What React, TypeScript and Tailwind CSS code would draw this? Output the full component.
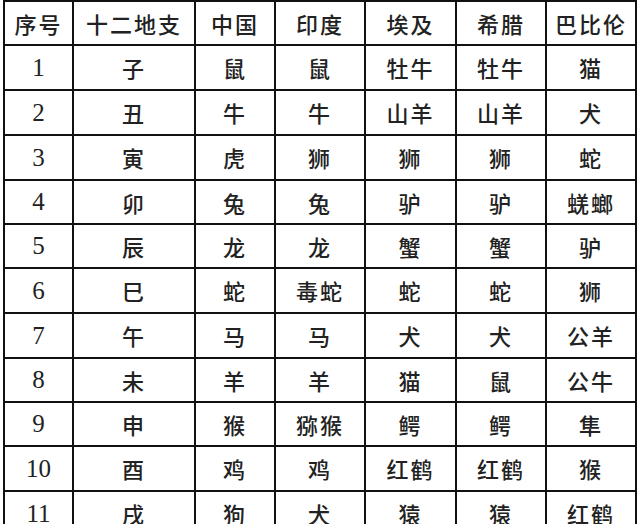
import React from "react";

const headers = ["序号", "十二地支", "中国", "印度", "埃及", "希腊", "巴比伦"];

const rows: string[][] = [
  ["1", "子", "鼠", "鼠", "牡牛", "牡牛", "猫"],
  ["2", "丑", "牛", "牛", "山羊", "山羊", "犬"],
  ["3", "寅", "虎", "狮", "狮", "狮", "蛇"],
  ["4", "卯", "兔", "兔", "驴", "驴", "蜣螂"],
  ["5", "辰", "龙", "龙", "蟹", "蟹", "驴"],
  ["6", "巳", "蛇", "毒蛇", "蛇", "蛇", "狮"],
  ["7", "午", "马", "马", "犬", "犬", "公羊"],
  ["8", "未", "羊", "羊", "猫", "鼠", "公牛"],
  ["9", "申", "猴", "猕猴", "鳄", "鳄", "隼"],
  ["10", "酉", "鸡", "鸡", "红鹤", "红鹤", "猴"],
  ["11", "戌", "狗", "犬", "猿", "猿", "红鹤"],
];

const cjk = "font-['Noto_Sans_CJK_SC',sans-serif] font-medium";

export default function App() {
  return (
    <div className="h-[524px] w-[640px] overflow-hidden bg-white pl-[3px]">
      <div className="grid w-[634px] grid-cols-[67px_120px_78px_88px_89px_88px_88px] grid-rows-[42px_43px_43px_43px_42px_42px_43px_43px_42px_42px_43px_43px] gap-[2px] bg-[#111] p-[2px] text-[#222]">
        {headers.map((h) => (
          <div
            key={h}
            className={`flex items-center justify-center bg-white text-[22px] tracking-[2px] ${cjk}`}
          >
            {h}
          </div>
        ))}
        {rows.map((row) =>
          row.map((cell, i) => (
            <div
              key={row[0] + "-" + i}
              className={
                i === 0
                  ? "flex items-center justify-center bg-white font-['Liberation_Serif',serif] text-[25px]"
                  : `flex items-center justify-center bg-white text-[22px] tracking-[2px] ${cjk}`
              }
            >
              {cell}
            </div>
          )),
        )}
      </div>
    </div>
  );
}
